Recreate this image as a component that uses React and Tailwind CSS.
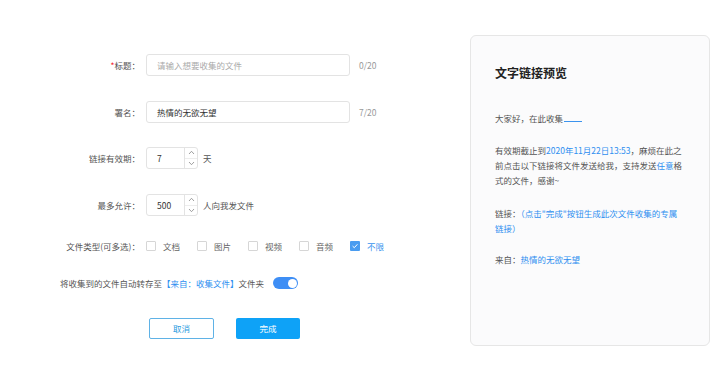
const font = "font-['Noto_Sans_CJK_SC','Noto_Sans',sans-serif]";

const Label = ({ children, required }) => (
  <div className="w-[140px] shrink-0 text-right text-[8.5px] text-[#555]">
    {required && <span className="text-[#f5222d]">*</span>}
    {children}
  </div>
);

const Spinner = ({ value }) => (
  <div className="ml-[6px] flex h-[22px] w-[52px] items-center rounded-[3px] border border-[#e3e3e3] bg-white">
    <div className="flex-1 pl-[10px] text-[8.5px] text-[#333]">{value}</div>
    <div className="flex h-full w-[13px] flex-col border-l border-[#e3e3e3]">
      <div className="flex flex-1 items-center justify-center border-b border-[#ededed]">
        <svg width="7" height="5" viewBox="0 0 7 5" fill="none">
          <path d="M1 4L3.5 1.3L6 4" stroke="#888" strokeWidth="0.8" />
        </svg>
      </div>
      <div className="flex flex-1 items-center justify-center">
        <svg width="7" height="5" viewBox="0 0 7 5" fill="none">
          <path d="M1 1L3.5 3.7L6 1" stroke="#888" strokeWidth="0.8" />
        </svg>
      </div>
    </div>
  </div>
);

const Check = ({ label, checked }) => (
  <div className="flex items-center">
    {checked ? (
      <div className="flex h-[10px] w-[10px] items-center justify-center rounded-[1px] bg-[#4a9cf0]">
        <svg width="8" height="8" viewBox="0 0 8 8" fill="none">
          <path d="M1.6 4.1L3.3 5.7L6.4 2.3" stroke="white" strokeWidth="1" />
        </svg>
      </div>
    ) : (
      <div className="h-[10px] w-[10px] rounded-[1px] border border-[#d6d6d6] bg-white" />
    )}
    <span className={`ml-[7px] w-[17px] text-[8.5px] ${checked ? "text-[#3a94ee]" : "text-[#666]"}`}>{label}</span>
  </div>
);

export default function App() {
  return (
    <div className={`${font} flex h-[378px] w-[723px] bg-white`}>
      {/* form */}
      <div className="w-[470px] shrink-0 pt-[54px]">
        <div className="mb-[25px] flex h-[22px] items-center">
          <Label required>标题：</Label>
          <div className="ml-[6px] flex h-[22px] w-[204px] items-center rounded-[3px] border border-[#e3e3e3] pl-[10px] text-[8.5px] text-[#aaa]">
            请输入想要收集的文件
          </div>
          <span className="ml-[9px] text-[8.5px] text-[#999]">0/20</span>
        </div>
        <div className="mb-[24px] flex h-[22px] items-center">
          <Label>署名：</Label>
          <div className="ml-[6px] flex h-[22px] w-[204px] items-center rounded-[3px] border border-[#e3e3e3] pl-[10px] text-[8.5px] text-[#333]">
            热情的无欲无望
          </div>
          <span className="ml-[9px] text-[8.5px] text-[#999]">7/20</span>
        </div>
        <div className="mb-[25px] flex h-[22px] items-center">
          <Label>链接有效期：</Label>
          <Spinner value="7" />
          <span className="ml-[5px] text-[8.5px] text-[#555]">天</span>
        </div>
        <div className="mb-[19px] flex h-[22px] items-center">
          <Label>最多允许：</Label>
          <Spinner value="500" />
          <span className="ml-[5px] text-[8.5px] text-[#555]">人向我发文件</span>
        </div>
        <div className="mb-[15px] flex h-[22px] items-center">
          <Label>文件类型(可多选)：</Label>
          <div className="ml-[6px] flex items-center gap-[17px]">
            <Check label="文档" />
            <Check label="图片" />
            <Check label="视频" />
            <Check label="音频" />
            <Check label="不限" checked />
          </div>
        </div>
        <div className="mb-[24px] flex h-[22px] items-center pl-[60px]">
          <span className="text-[8.5px] text-[#555]">
            将收集到的文件自动转存至<span className="text-[#2f8ff0]">【来自：收集文件】</span>文件夹
          </span>
          <div className="ml-[9px] flex h-[12px] w-[25px] items-center justify-end rounded-full bg-[#3e8ef5] pr-[1.5px]">
            <div className="h-[9px] w-[9px] rounded-full bg-white" />
          </div>
        </div>
        <div className="flex items-center pl-[149px]">
          <button className="flex h-[21px] w-[65px] items-center justify-center rounded-[2px] border border-[#5fb2e6] bg-white text-[8.5px] text-[#2a9be0]">
            取消
          </button>
          <button className="ml-[22px] flex h-[21px] w-[64px] items-center justify-center rounded-[2px] bg-[#0ea2f7] text-[8.5px] text-white">
            完成
          </button>
        </div>
      </div>

      {/* preview panel */}
      <div className="pt-[35px]">
        <div className="h-[311px] w-[240px] rounded-[6px] border border-[#e6e6e6] bg-[#fbfbfc] px-[24px] pt-[27px]">
          <div className="text-[12px] font-semibold leading-[20px] text-[#222]">文字链接预览</div>
          <div className="mt-[28px] flex items-end text-[8.5px] leading-[15px] text-[#555]">
            大家好，在此收集
            <span className="mb-[4px] ml-[1px] inline-block h-[1px] w-[18px] bg-[#3b93ee]" />
          </div>
          <div className="mt-[17px] whitespace-nowrap text-[8.5px] leading-[15px] text-[#555]">
            有效期截止到<span className="text-[#2f8ff0]">2020年11月22日13:53</span>，麻烦在此之
            <br />
            前点击以下链接将文件发送给我，支持发送<span className="text-[#2f8ff0]">任意</span>格
            <br />
            式的文件，感谢~
          </div>
          <div className="mt-[18px] whitespace-nowrap text-[8.5px] leading-[15px] text-[#555]">
            链接：<span className="text-[#2f8ff0]">（点击"完成"按钮生成此次文件收集的专属</span>
            <br />
            <span className="text-[#2f8ff0]">链接）</span>
          </div>
          <div className="mt-[16px] text-[8.5px] leading-[15px] text-[#555]">
            来自：<span className="text-[#2f8ff0]">热情的无欲无望</span>
          </div>
        </div>
      </div>
    </div>
  );
}
